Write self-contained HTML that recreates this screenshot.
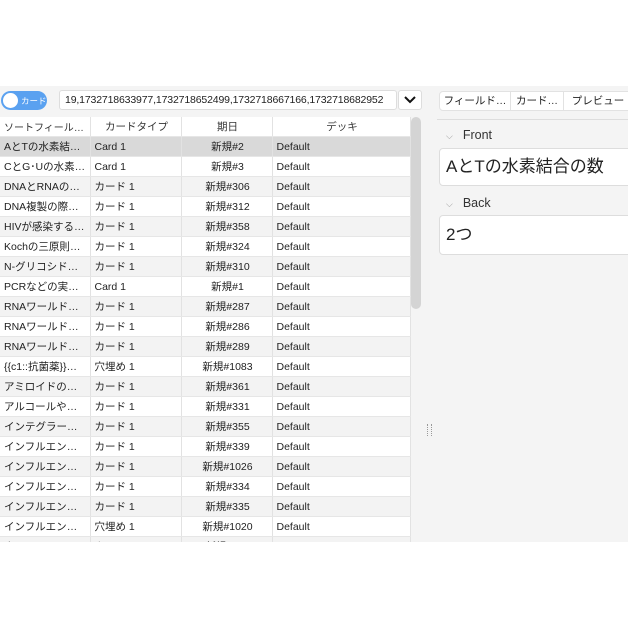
<!DOCTYPE html><html><head><meta charset="utf-8"><style>
body{margin:0;width:628px;height:628px;background:#fff;position:relative;overflow:hidden;font-family:"Liberation Sans","Noto Sans CJK JP",sans-serif;font-size:10.5px;color:#222}
.app{position:absolute;left:0;top:86px;width:628px;height:456px;background:#f4f4f4}
.abs{position:absolute}
.tog{left:1px;top:91px;width:46px;height:19px;border-radius:10px;background:#5aa1f0}
.knob{left:3px;top:93px;width:15px;height:15px;border-radius:50%;background:#fff}
.search{left:59px;top:90px;width:338px;height:20px;background:#fff;border:1px solid #ddd;border-radius:3px;font-size:10.5px;line-height:19px;padding-left:5px;box-sizing:border-box;white-space:nowrap;overflow:hidden;letter-spacing:-0.15px}
.dd{left:398px;top:90px;width:24px;height:20px;background:#fff;border:1px solid #ddd;border-radius:3px;box-sizing:border-box}
table{position:absolute;left:0;top:117px;border-collapse:collapse;width:410px;table-layout:fixed}
td,th{height:19px;padding:0 2px 0 4px;border-right:1px solid #e2e2e2;border-bottom:1px solid #e6e6e6;white-space:nowrap;overflow:hidden;text-overflow:ellipsis;font-weight:normal;font-size:10.5px}
th{background:#fff;text-align:center;color:#333}
tr:nth-child(even) td{background:#f3f3f3}
tr:nth-child(odd) td{background:#fff}
tr.sel td{background:#d9d9d9}
td.c{text-align:center}
.btn{top:91px;height:20px;background:#fff;border:1px solid #e2e2e2;box-sizing:border-box;font-size:10.5px;line-height:18px;text-align:center;white-space:nowrap;overflow:hidden}
.fld{left:439px;width:200px;background:#fff;border:1px solid #ddd;border-radius:4px;box-sizing:border-box;font-size:17px;padding-left:6px}
.lbl{left:446px;font-size:12.5px;color:#333}
</style></head><body>
<div class="app"></div>
<div class="abs tog"></div><div class="abs knob"></div>
<div class="abs" style="left:21px;top:95px;font-size:8.5px;color:#fff">カード</div>
<div class="abs search">19,1732718633977,1732718652499,1732718667166,1732718682952</div>
<div class="abs dd"><svg width="22" height="18" style="position:absolute;left:0;top:0"><path d="M6 6l5 5 5-5" stroke="#111" stroke-width="2" fill="none"/></svg></div>
<table>
<colgroup><col style="width:90px"><col style="width:91px"><col style="width:91px"><col style="width:138px"></colgroup>
<tr><th style="text-align:left;font-size:10px">ソートフィールド <span style="font-size:7px;margin-left:4px">▲</span></th><th>カードタイプ</th><th>期日</th><th>デッキ</th></tr>
<tr class="sel"><td>AとTの水素結…</td><td>Card 1</td><td class="c">新規#2</td><td>Default</td></tr>
<tr><td>CとG･Uの水素…</td><td>Card 1</td><td class="c">新規#3</td><td>Default</td></tr>
<tr><td>DNAとRNAの構…</td><td>カード 1</td><td class="c">新規#306</td><td>Default</td></tr>
<tr><td>DNA複製の際に…</td><td>カード 1</td><td class="c">新規#312</td><td>Default</td></tr>
<tr><td>HIVが感染する…</td><td>カード 1</td><td class="c">新規#358</td><td>Default</td></tr>
<tr><td>Kochの三原則とは</td><td>カード 1</td><td class="c">新規#324</td><td>Default</td></tr>
<tr><td>N-グリコシド結合…</td><td>カード 1</td><td class="c">新規#310</td><td>Default</td></tr>
<tr><td>PCRなどの実験…</td><td>Card 1</td><td class="c">新規#1</td><td>Default</td></tr>
<tr><td>RNAワールドの…</td><td>カード 1</td><td class="c">新規#287</td><td>Default</td></tr>
<tr><td>RNAワールド仮…</td><td>カード 1</td><td class="c">新規#286</td><td>Default</td></tr>
<tr><td>RNAワールド仮…</td><td>カード 1</td><td class="c">新規#289</td><td>Default</td></tr>
<tr><td>{{c1::抗菌薬}}…</td><td>穴埋め 1</td><td class="c">新規#1083</td><td>Default</td></tr>
<tr><td>アミロイドの構造…</td><td>カード 1</td><td class="c">新規#361</td><td>Default</td></tr>
<tr><td>アルコールや石鹸…</td><td>カード 1</td><td class="c">新規#331</td><td>Default</td></tr>
<tr><td>インテグラーゼの…</td><td>カード 1</td><td class="c">新規#355</td><td>Default</td></tr>
<tr><td>インフルエンザの…</td><td>カード 1</td><td class="c">新規#339</td><td>Default</td></tr>
<tr><td>インフルエンザウイ…</td><td>カード 1</td><td class="c">新規#1026</td><td>Default</td></tr>
<tr><td>インフルエンザウイ…</td><td>カード 1</td><td class="c">新規#334</td><td>Default</td></tr>
<tr><td>インフルエンザウイ…</td><td>カード 1</td><td class="c">新規#335</td><td>Default</td></tr>
<tr><td>インフルエンザパ…</td><td>穴埋め 1</td><td class="c">新規#1020</td><td>Default</td></tr>
<tr><td>ネイルスのエンベ…</td><td>カード 1</td><td class="c">新規#338</td><td>Default</td></tr>
</table>
<div class="abs" style="left:0;top:542px;width:628px;height:86px;background:#fff"></div>
<div class="abs" style="left:411px;top:117px;width:10px;height:192px;background:#d4d4d4;border-radius:5px"></div>
<div class="abs" style="left:427px;top:424px;width:3px;height:12px;border-left:1px dotted #999;border-right:1px dotted #999"></div>
<div class="abs btn" style="left:439px;width:72px;border-radius:4px 0 0 4px">フィールド…</div>
<div class="abs btn" style="left:510px;width:54px">カード…</div>
<div class="abs btn" style="left:563px;width:70px">プレビュー</div>
<div class="abs" style="left:437px;top:119px;width:191px;height:1px;background:#ddd"></div>
<div class="abs lbl" style="top:128px"><span style="font-size:9px;color:#999;margin-right:10px">⌵</span>Front</div>
<div class="abs fld" style="top:148px;height:38px;line-height:36px">AとTの水素結合の数</div>
<div class="abs lbl" style="top:196px"><span style="font-size:9px;color:#999;margin-right:10px">⌵</span>Back</div>
<div class="abs fld" style="top:215px;height:40px;line-height:38px">2つ</div>
</body></html>
